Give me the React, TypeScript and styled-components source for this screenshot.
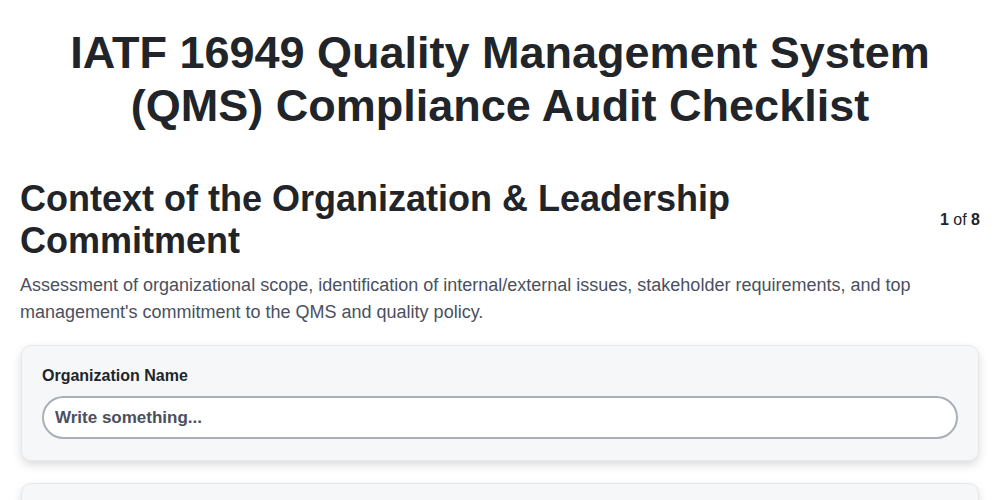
import React from "react";
import styled, { createGlobalStyle } from "styled-components";

const Global = createGlobalStyle`
  html, body { margin: 0; padding: 0; background: #ffffff; }
  body { font-family: "Liberation Sans", Arial, sans-serif; color: #212529; }
  * { box-sizing: border-box; }
`;

const Page = styled.div`
  padding: 26px 20px 0;
  display: flex;
  flex-direction: column;
`;

const Title = styled.h1`
  margin: 0 0 46px;
  text-align: center;
  font-size: 45px;
  line-height: 53px;
  font-weight: 700;
  color: #212529;
  padding: 0 40px;
`;

const SectionHeader = styled.div`
  display: flex;
  align-items: center;
  justify-content: space-between;
  gap: 20px;
`;

const SectionTitle = styled.h2`
  margin: 0;
  font-size: 36px;
  line-height: 42px;
  font-weight: 700;
  color: #212529;
  max-width: 740px;
`;

const Pager = styled.div`
  font-size: 16px;
  color: #212529;
  white-space: nowrap;
  b { font-weight: 700; }
`;

const Description = styled.p`
  margin: 10px 0 19px;
  font-size: 18px;
  line-height: 27px;
  color: #4a5060;
`;

const Card = styled.div`
  background: #f6f7f9;
  border: 1px solid #e6e8eb;
  border-radius: 10px;
  box-shadow: 0 4px 10px rgba(0, 0, 0, 0.14);
  padding: 20px 20px 21px;
  display: flex;
  flex-direction: column;
  gap: 10px;
  margin: 0 1px 22px;
`;

const Label = styled.label`
  font-size: 16px;
  font-weight: 700;
  color: #212529;
  line-height: 20px;
`;

const Input = styled.input`
  height: 43px;
  border: 2px solid #a8b0b9;
  border-radius: 22px;
  background: #ffffff;
  padding: 0 11px;
  font-family: "Liberation Sans", Arial, sans-serif;
  font-size: 17px;
  font-weight: 700;
  color: #212529;
  outline: none;
  &::placeholder { color: #4a5060; opacity: 1; }
`;

export default function App() {
  return (
    <>
      <Global />
      <Page>
        <Title>IATF 16949 Quality Management System (QMS) Compliance Audit Checklist</Title>
        <SectionHeader>
          <SectionTitle>Context of the Organization &amp; Leadership Commitment</SectionTitle>
          <Pager><b>1</b> of <b>8</b></Pager>
        </SectionHeader>
        <Description>
          Assessment of organizational scope, identification of internal/external issues, stakeholder requirements, and top management's commitment to the QMS and quality policy.
        </Description>
        <Card>
          <Label>Organization Name</Label>
          <Input placeholder="Write something..." />
        </Card>
        <Card>
          <Label>Audit Date</Label>
          <Input placeholder="Write something..." />
        </Card>
      </Page>
    </>
  );
}
